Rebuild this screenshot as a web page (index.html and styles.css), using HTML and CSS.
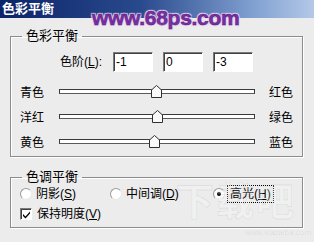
FILE: index.html
```html
<!DOCTYPE html>
<html lang="zh-CN">

<head>
  <meta charset="UTF-8">
  <title>色彩平衡</title>
  <link rel="stylesheet" href="styles.css">
</head>

<body>
  <div class="dialog">
    <div class="titlebar">色彩平衡</div>

    <fieldset class="group balance">
      <legend>色彩平衡</legend>
      <div class="levels">
        <label class="levels-label">色阶(<u>L</u>):</label>
        <input class="num" value="-1">
        <input class="num" value="0">
        <input class="num" value="-3">
      </div>
      <div class="slider-row">
        <span class="lbl">青色</span>
        <div class="track"><span class="thumb" style="left: 49.5%"></span></div>
        <span class="lbl">红色</span>
      </div>
      <div class="slider-row">
        <span class="lbl">洋红</span>
        <div class="track"><span class="thumb" style="left: 50%"></span></div>
        <span class="lbl">绿色</span>
      </div>
      <div class="slider-row">
        <span class="lbl">黄色</span>
        <div class="track"><span class="thumb" style="left: 48.5%"></span></div>
        <span class="lbl">蓝色</span>
      </div>
    </fieldset>

    <fieldset class="group tone">
      <legend>色调平衡</legend>
      <div class="radios">
        <span class="opt opt-shadow"><span class="radio"></span><span>阴影(<u>S</u>)</span></span>
        <span class="opt opt-mid"><span class="radio"></span><span>中间调(<u>D</u>)</span></span>
        <span class="opt"><span class="radio checked"></span><span class="focus">高光(<u>H</u>)</span></span>
      </div>
      <div class="check-row">
        <span class="checkbox">
          <svg width="9" height="9" viewBox="0 0 9 9"><path d="M1 4 L3.5 6.5 L8 1.5 L8 3.5 L3.5 8.5 L1 6 Z" fill="#000" /></svg>
        </span>
        <span>保持明度(<u>V</u>)</span>
      </div>
    </fieldset>

    <!-- watermarks on the original screenshot -->
    <div class="mark-68ps">www.68ps.com</div>
    <div class="mark-xzb">下载吧</div>
    <div class="mark-xzb-url">www.xiazaiba.com</div>
  </div>
</body>

</html>
```

FILE: styles.css
```css
body {
  margin: 0;
  background: #ececec;
  font-family: "Liberation Sans", "Noto Sans CJK SC", sans-serif;
  font-size: 12px;
  line-height: 14px;
  color: #000;
}

.dialog {
  position: relative;
  width: 314px;
  height: 242px;
  overflow: hidden;
}

.titlebar {
  height: 18px;
  padding-left: 2px;
  background: linear-gradient(90deg, #0c2468 0%, #2a4a8e 45%, #7f9fd0 80%, #b4c8e8 100%);
  color: #fff;
  font-weight: bold;
  font-size: 13px;
  line-height: 17px;
}

.group {
  margin: 0 11px 0 10px;
  padding: 0;
  border: 1px solid #8c8c8c;
  box-shadow: inset 1px 1px 0 #fff, 1px 1px 0 #fff;
}

.group legend {
  margin-left: 11px;
  padding: 0 4px;
  font-size: 13px;
  line-height: 14px;
}

.balance {
  margin-top: 11px;
  padding-bottom: 1px;
}

.tone {
  margin-top: 13px;
  padding-bottom: 5px;
}

.levels {
  display: flex;
  align-items: center;
  gap: 10px;
  margin-top: 9px;
  padding-left: 49px;
}

.levels-label {
  width: 45px;
  margin-right: -2px;
}

.num {
  box-sizing: border-box;
  width: 40px;
  height: 20px;
  margin: 0;
  padding: 0 2px;
  border: 1px solid;
  border-color: #7a7a7a #fff #fff #7a7a7a;
  box-shadow: inset 1px 1px 0 #404040;
  background: #fff;
  font-family: "Liberation Sans", sans-serif;
  font-size: 12px;
  outline: none;
}

.slider-row {
  display: grid;
  grid-template-columns: 24px 1fr 24px;
  column-gap: 15px;
  align-items: center;
  height: 25px;
  padding: 0 9px;
}

.levels + .slider-row {
  margin-top: 8px;
}

.track {
  position: relative;
  height: 3px;
  margin-top: -2px;
  margin-right: -1px;
  border: 1px solid #3a3a3a;
  border-bottom-color: #5a5a5a;
  background: #fff;
}

.thumb {
  position: absolute;
  top: -5px;
  width: 11px;
  height: 13px;
  margin-left: -5px;
  background: url("data:image/svg+xml,%3Csvg xmlns='http://www.w3.org/2000/svg' width='11' height='13'%3E%3Cpath d='M0.5 12.5 L0.5 5 L5.5 0.5 L10.5 5 L10.5 12.5 Z' fill='%23fafafa' stroke='%23303030'/%3E%3C/svg%3E") no-repeat;
}

.radios {
  display: flex;
  align-items: center;
  height: 16px;
  margin-top: 2px;
  padding-left: 9px;
}

.opt {
  display: flex;
  align-items: center;
  gap: 4px;
}

.opt-shadow {
  width: 90px;
}

.opt-mid {
  width: 103px;
}

.radio {
  box-sizing: border-box;
  width: 12px;
  height: 12px;
  border-radius: 50%;
  border: 1px solid;
  border-color: #9a9a9a #e8e8e8 #e8e8e8 #9a9a9a;
  background: #fff;
  position: relative;
}

.radio.checked::after {
  content: "";
  position: absolute;
  left: 3px;
  top: 3px;
  width: 4px;
  height: 4px;
  border-radius: 50%;
  background: #000;
}

.focus {
  outline: 1px dotted #000;
  outline-offset: 1px;
  padding: 0 1px;
}

.check-row {
  display: flex;
  align-items: center;
  gap: 5px;
  height: 16px;
  margin-top: 4px;
  padding-left: 9px;
}

.checkbox {
  box-sizing: border-box;
  display: flex;
  align-items: center;
  justify-content: center;
  width: 12px;
  height: 12px;
  border: 1px solid;
  border-color: #7a7a7a #fff #fff #7a7a7a;
  box-shadow: inset 1px 1px 0 #404040;
  background: #fff;
}

.mark-68ps {
  position: absolute;
  left: 92px;
  top: 6px;
  font-family: "Liberation Sans", sans-serif;
  font-weight: bold;
  font-size: 21px;
  line-height: 24px;
  letter-spacing: -0.3px;
  color: #7b2fa6;
  -webkit-text-stroke: 0.6px #5a1d80;
  text-shadow: 0 0 1px #fff, 1px 1px 1px #e6d4f0, -1px -1px 1px #e6d4f0, 1px -1px 1px #e6d4f0, -1px 1px 1px #e6d4f0;
}

.mark-xzb {
  position: absolute;
  left: 176px;
  top: 178px;
  font-family: "Noto Sans CJK SC", sans-serif;
  font-weight: bold;
  font-size: 38px;
  line-height: 42px;
  letter-spacing: 2px;
  color: rgba(255, 255, 255, 0.25);
  -webkit-text-stroke: 1px rgba(0, 0, 0, 0.07);
  pointer-events: none;
}

.mark-xzb-url {
  position: absolute;
  left: 245px;
  top: 228px;
  font-family: "Liberation Sans", sans-serif;
  font-size: 8px;
  line-height: 10px;
  color: rgba(0, 0, 0, 0.09);
}
```
